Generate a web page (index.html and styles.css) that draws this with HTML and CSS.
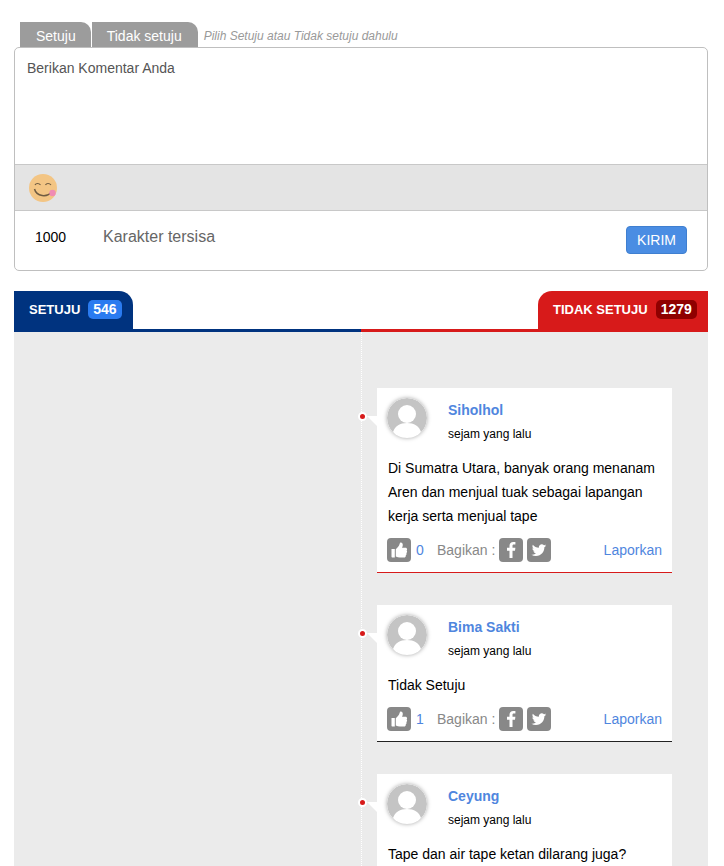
FILE: index.html
```html
<!DOCTYPE html>
<html lang="en">

<head>
    <meta charset="UTF-8">
    <meta name="viewport" content="width=device-width, initial-scale=1.0">
    <title>Komentar</title>
    <link rel="stylesheet" href="styles.css">
</head>

<body>

<svg class="icon-defs" width="0" height="0" aria-hidden="true">
    <symbol id="icon-like" viewBox="0 0 24 24">
        <rect width="24" height="24" rx="4" fill="#888"/>
        <path fill="#fff" d="M4.500 11h3.300v8.500H5.200c-.4 0-.7-.3-.7-.7zM8.800 11.200c1.700-1.300 3.300-3 3.800-5.100.2-.9.500-1.500 1.300-1.500 1.200 0 1.900 1 1.900 2.300 0 1-.4 2-.8 2.800h3.400c1 0 1.700.7 1.700 1.600 0 .5-.2.900-.5 1.200.3.300.5.700.5 1.200 0 .6-.3 1.100-.8 1.400.2.300.3.600.3 1 0 .6-.4 1.100-.9 1.300.1.200.1.400.1.600 0 .9-.7 1.500-1.600 1.500h-4.400c-1.300 0-2.500-.3-4-.9z"/>
    </symbol>
    <symbol id="icon-fb" viewBox="0 0 24 24">
        <rect width="24" height="24" rx="4" fill="#888"/>
        <path fill="#fff" d="M13.500 20v-7.300H16l.4-2.900h-2.900V8c0-.8.200-1.400 1.400-1.400h1.500V4c-.3 0-1.200-.1-2.200-.1-2.200 0-3.700 1.300-3.700 3.800v2.100H8v2.900h2.500V20z"/>
    </symbol>
    <symbol id="icon-tw" viewBox="0 0 24 24">
        <rect width="24" height="24" rx="4" fill="#888"/>
        <path fill="#fff" transform="translate(2.400 2.400) scale(.8)" d="M21 6.500c-.7.300-1.400.5-2.100.6.800-.5 1.300-1.200 1.600-2-.7.400-1.500.7-2.300.9-.7-.7-1.600-1.200-2.700-1.200-2 0-3.700 1.700-3.700 3.700 0 .3 0 .6.100.8-3.100-.2-5.800-1.600-7.600-3.900-.3.500-.5 1.200-.5 1.900 0 1.300.7 2.400 1.600 3.100-.6 0-1.200-.2-1.700-.5 0 1.800 1.300 3.300 3 3.700-.3.100-.6.100-1 .1-.2 0-.5 0-.7-.1.500 1.500 1.800 2.500 3.500 2.600-1.300 1-2.900 1.600-4.600 1.600H2.500c1.700 1.100 3.600 1.700 5.700 1.700 6.800 0 10.500-5.600 10.500-10.500v-.5c.9-.5 1.600-1.200 2.300-2z"/>
    </symbol>
    <symbol id="icon-user" viewBox="0 0 40 40">
        <circle cx="20" cy="20" r="20" fill="#c4c4c4"/>
        <circle cx="20" cy="16" r="9" fill="#fff"/>
        <path fill="#fff" d="M6 34C8 28 13 25 20 25S32 28 34 34C30.500 38 26 40 20 40S9.500 38 6 34z"/>
    </symbol>
</svg>

<div class="page">

    <div class="form-tabs">
        <span class="form-tab">Setuju</span>
        <span class="form-tab">Tidak setuju</span>
        <span class="form-hint">Pilih Setuju atau Tidak setuju dahulu</span>
    </div>

    <div class="form-box">
        <div class="form-text">Berikan Komentar Anda</div>
        <div class="emoji-bar">
            <svg class="emoji" width="30" height="30" viewBox="0 0 30 30">
                <circle cx="15" cy="15" r="14" fill="#f3c584"/>
                <path d="M7 12c1-2 4-2 5.500 0M17.500 12c1-2 4-2 5.500 0" fill="none" stroke="#6f5c42" stroke-width="1.200"/>
                <path d="M6.500 16c2 7.500 12.500 9 17.500 2.500" fill="none" stroke="#6f5c42" stroke-width="1.500"/>
                <circle cx="24.500" cy="20" r="3.200" fill="#f08cb4"/>
            </svg>
        </div>
        <div class="form-foot">
            <span class="char-count">1000</span>
            <span class="char-label">Karakter tersisa</span>
            <button class="send-btn">KIRIM</button>
        </div>
    </div>

    <div class="vote-head">
        <div class="vote-tab vote-agree">SETUJU <span class="vote-count">546</span></div>
        <div class="vote-tab vote-disagree">TIDAK SETUJU <span class="vote-count">1279</span></div>
    </div>

    <div class="board">
        <div class="board-col"></div>
        <div class="board-col board-right">

            <div class="comment comment-red">
                <div class="comment-head">
                    <svg class="avatar" width="40" height="40"><use href="#icon-user"/></svg>
                    <div class="comment-who">
                        <a class="comment-name">Siholhol</a>
                        <span class="comment-time">sejam yang lalu</span>
                    </div>
                </div>
                <p class="comment-body">Di Sumatra Utara, banyak orang menanam Aren dan menjual tuak sebagai lapangan kerja serta menjual tape</p>
                <div class="comment-actions">
                    <svg class="btn-icon" width="24" height="24"><use href="#icon-like"/></svg>
                    <span class="like-count">0</span>
                    <span class="share-label">Bagikan :</span>
                    <svg class="btn-icon" width="24" height="24"><use href="#icon-fb"/></svg>
                    <svg class="btn-icon" width="24" height="24"><use href="#icon-tw"/></svg>
                    <a class="report">Laporkan</a>
                </div>
            </div>

            <div class="comment comment-dark">
                <div class="comment-head">
                    <svg class="avatar" width="40" height="40"><use href="#icon-user"/></svg>
                    <div class="comment-who">
                        <a class="comment-name">Bima Sakti</a>
                        <span class="comment-time">sejam yang lalu</span>
                    </div>
                </div>
                <p class="comment-body">Tidak Setuju</p>
                <div class="comment-actions">
                    <svg class="btn-icon" width="24" height="24"><use href="#icon-like"/></svg>
                    <span class="like-count">1</span>
                    <span class="share-label">Bagikan :</span>
                    <svg class="btn-icon" width="24" height="24"><use href="#icon-fb"/></svg>
                    <svg class="btn-icon" width="24" height="24"><use href="#icon-tw"/></svg>
                    <a class="report">Laporkan</a>
                </div>
            </div>

            <div class="comment comment-red">
                <div class="comment-head">
                    <svg class="avatar" width="40" height="40"><use href="#icon-user"/></svg>
                    <div class="comment-who">
                        <a class="comment-name">Ceyung</a>
                        <span class="comment-time">sejam yang lalu</span>
                    </div>
                </div>
                <p class="comment-body">Tape dan air tape ketan dilarang juga?</p>
            </div>

        </div>
    </div>

</div>

</body>
</html>
```

FILE: styles.css
```css
body {
    font-family: "Liberation Sans", Arial, sans-serif;
    margin: 0;
    padding: 0;
    background: #fff;
    color: #000;
}

.icon-defs {
    position: absolute;
}

.page {
    height: 866px;
    overflow: hidden;
    padding: 22px 16px 0 14px;
    box-sizing: border-box;
}

.form-tabs {
    display: flex;
    align-items: flex-end;
    padding-left: 6px;
    height: 25px;
}

.form-tab {
    height: 25px;
    line-height: 29px;
    padding: 0 15px 0 16px;
    margin-right: 1px;
    background: #9c9c9c;
    color: #fff;
    font-size: 14px;
    border-top-right-radius: 10px;
}

.form-tab + .form-tab {
    margin-right: 0;
    padding: 0 16px 0 15px;
}

.form-hint {
    margin-left: 6px;
    color: #999;
    font-size: 12px;
    font-style: italic;
    line-height: 22px;
}

.form-box {
    border: 1px solid #bfbfbf;
    border-radius: 5px;
    height: 224px;
    box-sizing: border-box;
    overflow: hidden;
}

.form-text {
    height: 116px;
    padding: 11px 12px;
    box-sizing: border-box;
    font-size: 14px;
    line-height: 18px;
    color: #555;
}

.emoji-bar {
    height: 47px;
    box-sizing: border-box;
    background: #e4e4e4;
    border-top: 1px solid #c8c8c8;
    border-bottom: 1px solid #c8c8c8;
    padding: 8px 13px;
}

.emoji {
    display: block;
}

.form-foot {
    display: flex;
    align-items: flex-start;
    padding: 15px 20px 0 20px;
}

.char-count {
    width: 68px;
    font-size: 14px;
    line-height: 22px;
}

.char-label {
    font-size: 16px;
    line-height: 22px;
    color: #666;
}

.send-btn {
    margin-left: auto;
    width: 61px;
    height: 28px;
    padding: 0;
    background: #4a8de3;
    border: 1px solid #3f7fd0;
    border-radius: 4px;
    color: #fff;
    font-family: inherit;
    font-size: 14px;
}

.vote-head {
    display: flex;
    justify-content: space-between;
    margin-top: 20px;
    height: 41px;
    background: linear-gradient(to right, #00337f 50%, #d71a1a 50%) bottom / 100% 3px no-repeat;
}

.vote-tab {
    display: flex;
    align-items: center;
    gap: 8px;
    height: 38px;
    box-sizing: border-box;
    padding: 0 0 2px 15px;
    color: #fff;
    font-size: 13px;
    font-weight: bold;
    white-space: nowrap;
}

.vote-agree {
    width: 119px;
    background: #00337f;
    border-top-right-radius: 14px;
}

.vote-disagree {
    width: 170px;
    background: #d71a1a;
    border-top-left-radius: 14px;
}

.vote-count {
    min-width: 32px;
    box-sizing: border-box;
    padding: 0 5px;
    border-radius: 5px;
    background: #2a7bf0;
    font-size: 14px;
    line-height: 19px;
    text-align: center;
}

.vote-disagree .vote-count {
    background: #8f0000;
}

.board {
    display: grid;
    grid-template-columns: 347px 1fr;
    background: #ebebeb;
    height: 600px;
}

.board-right {
    border-left: 1px dotted #fff;
    padding: 56px 36px 0 15px;
}

.comment {
    position: relative;
    background: #fff;
    margin-bottom: 32px;
    padding: 10px 10px 0;
    border-bottom: 1px solid #d71a1a;
}

.comment-dark {
    border-bottom-color: #222;
}

/* red dot on the line and the small arrow to the card */
.comment::before {
    content: "";
    position: absolute;
    left: -19px;
    top: 24px;
    width: 5px;
    height: 5px;
    border: 2px solid #fff;
    border-radius: 50%;
    background: #d71a1a;
}

.comment::after {
    content: "";
    position: absolute;
    left: -10px;
    top: 28px;
    border-top: 10px solid #fff;
    border-left: 10px solid transparent;
}

.comment-head {
    display: flex;
    height: 46px;
}

.avatar {
    border-radius: 50%;
    box-shadow: 0 0 4px rgba(0, 0, 0, 0.35);
}

.comment-who {
    display: flex;
    flex-direction: column;
    padding-left: 21px;
}

.comment-name {
    color: #4f86de;
    font-size: 14px;
    font-weight: bold;
    line-height: 24px;
}

.comment-time {
    font-size: 12px;
    line-height: 25px;
}

.comment-body {
    margin: 12px 0 6px 1px;
    font-size: 14px;
    line-height: 24px;
}

.comment-actions {
    display: flex;
    align-items: center;
    height: 38px;
    padding-bottom: 6px;
    box-sizing: border-box;
    font-size: 14px;
}

.btn-icon {
    margin-right: 4px;
}

.btn-icon:first-child {
    margin-right: 5px;
}

.like-count {
    width: 14px;
    margin-right: 7px;
    color: #4f86de;
}

.share-label {
    margin-right: 4px;
    color: #888;
}

.report {
    margin-left: auto;
    color: #4f86de;
}
```
